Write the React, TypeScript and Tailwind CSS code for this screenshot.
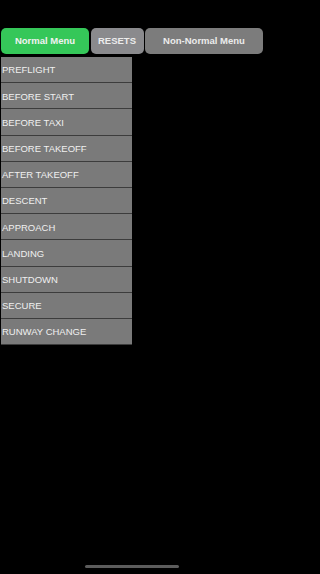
const checklists = [
  "PREFLIGHT",
  "BEFORE START",
  "BEFORE TAXI",
  "BEFORE TAKEOFF",
  "AFTER TAKEOFF",
  "DESCENT",
  "APPROACH",
  "LANDING",
  "SHUTDOWN",
  "SECURE",
  "RUNWAY CHANGE",
];

export default function App() {
  return (
    <div className="bg-black min-h-screen w-full">
      <main
        className="relative bg-black w-[265px] h-[574px] overflow-hidden text-white"
        style={{ fontFamily: '"Liberation Sans", Arial, sans-serif' }}
      >
        {/* TOP MENU TABS */}
        <div className="flex gap-[1.5px] pt-[28px] pl-[1px] pr-[2px]">
          <button className="w-[88px] h-[26px] rounded-[5px] bg-[#35c759] text-[9.5px] font-bold text-[#f2f2f2]">
            Normal Menu
          </button>
          <button className="w-[53px] h-[26px] rounded-[5px] bg-[#8a8a8d] text-[9.5px] font-bold text-[#ececec]">
            RESETS
          </button>
          <button className="flex-1 h-[26px] rounded-[5px] bg-[#7c7c7c] text-[9.5px] font-bold text-[#ececec]">
            Non-Normal Menu
          </button>
        </div>

        {/* CHECKLIST LIST */}
        <div className="mt-[3px] ml-[1px] w-[131px] flex flex-col">
          {checklists.map((item) => (
            <div
              key={item}
              className="h-[26.2px] flex items-center pl-[1px] pt-[2px] bg-[#7a7a7a] border-b border-[#3c3c3c] text-[9.5px] text-[#f0f0f0]"
            >
              {item}
            </div>
          ))}
        </div>

        {/* HOME INDICATOR */}
        <div className="absolute left-[85px] top-[565px] w-[94px] h-[3px] rounded-full bg-[#5c5c5c]" />
      </main>
    </div>
  );
}
